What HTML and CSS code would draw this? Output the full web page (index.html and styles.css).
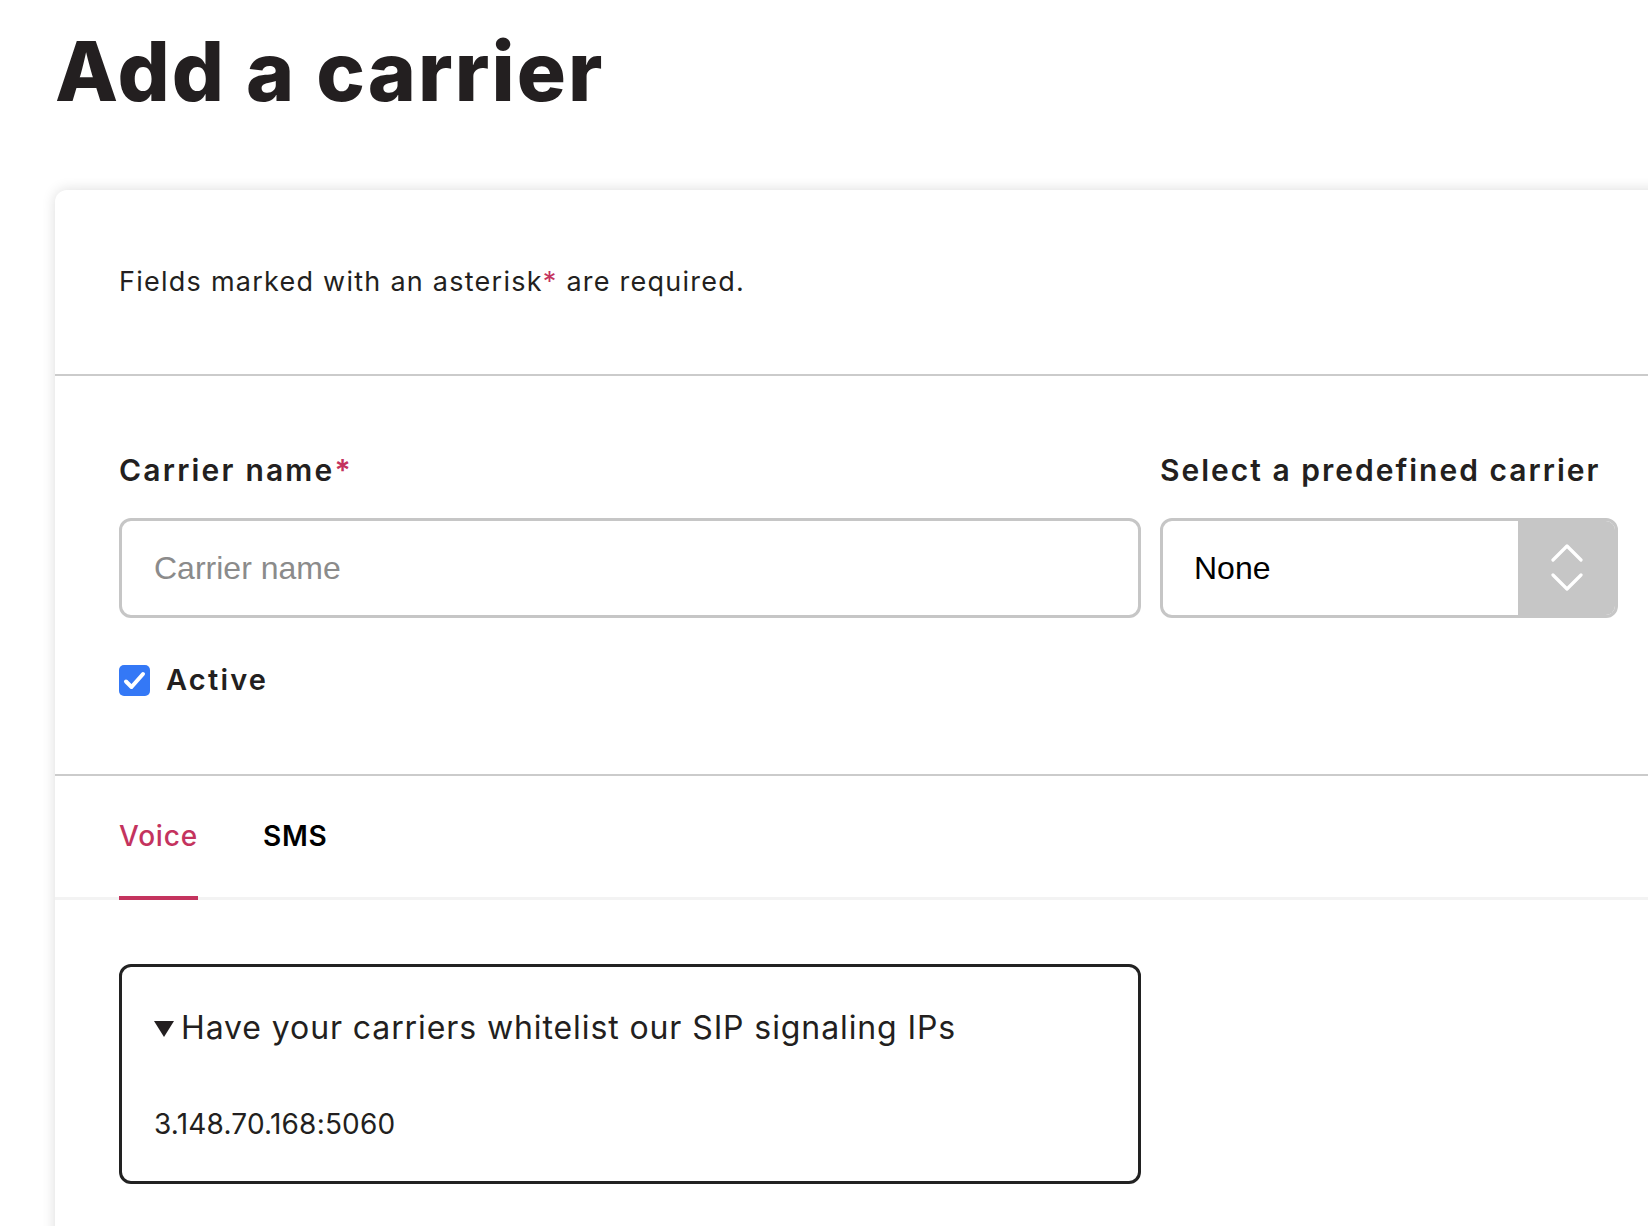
FILE: index.html
```html
<!DOCTYPE html>
<html lang="en">
<head>
<meta charset="utf-8">
<title>Add a carrier</title>
<link rel="stylesheet" href="styles.css">
</head>
<body>
<main class="page">
  <h1 class="title">Add a carrier</h1>
  <section class="card">
    <div class="section intro">
      <p class="note">Fields marked with an asterisk<span class="req">*</span> are required.</p>
    </div>
    <div class="section fields">
      <div class="grid">
        <label class="label" for="carrier-name">Carrier name<span class="req">*</span></label>
        <label class="label label-tight" for="predefined">Select a predefined carrier</label>
        <div class="input"><span class="placeholder">Carrier name</span></div>
        <div class="select" id="predefined">
          <span class="select-value">None</span>
          <span class="select-arrow">
            <svg width="32" height="50" viewBox="0 0 32 50" aria-hidden="true">
              <path d="M2 17 L16 3 L30 17" fill="none" stroke="#fff" stroke-width="3.2" stroke-linecap="round" stroke-linejoin="round"/>
              <path d="M2 32 L16 46 L30 32" fill="none" stroke="#fff" stroke-width="3.2" stroke-linecap="round" stroke-linejoin="round"/>
            </svg>
          </span>
        </div>
        <div class="check-row">
          <span class="checkbox">
            <svg width="31" height="31" viewBox="0 0 31 31" aria-hidden="true">
              <path d="M7 16.5 L12.5 22 L24 9" fill="none" stroke="#fff" stroke-width="4" stroke-linecap="round" stroke-linejoin="round"/>
            </svg>
          </span>
          <span class="check-label">Active</span>
        </div>
      </div>
    </div>
    <nav class="tabs">
      <span class="tab active">Voice</span>
      <span class="tab">SMS</span>
    </nav>
    <div class="section voice">
      <div class="details">
        <div class="summary">
          <svg class="tri" width="20" height="17" viewBox="0 0 20 17" aria-hidden="true"><path d="M0 1 H20 L10 17 Z" fill="#231f20"/></svg>
          <span>Have your carriers whitelist our SIP signaling IPs</span>
        </div>
        <p class="ip">3.148.70.168:5060</p>
      </div>
    </div>
  </section>
</main>
</body>
</html>
```

FILE: styles.css
```css
html, body {
  margin: 0;
  padding: 0;
  background: #ffffff;
  overflow: hidden;
}

body {
  font-family: "Inter", "Noto Sans", sans-serif;
  color: #231f20;
}

.page {
  padding-left: 55px;
}

.title {
  margin: 31px 0 0 0;
  font-size: 82px;
  line-height: 82px;
  font-weight: 800;
  letter-spacing: 2px;
  height: 82px;
}

.card {
  margin-top: 77px;
  width: 1700px;
  background: #fff;
  border-radius: 12px 0 0 0;
  box-shadow: 0 0 14px rgba(0, 0, 0, 0.14);
  min-height: 1100px;
}

.req {
  color: #c4335e;
}

.intro {
  padding: 72px 64px;
  border-bottom: 2px solid #cbcbcb;
}

.note {
  margin: 0;
  font-size: 27px;
  line-height: 40px;
  letter-spacing: 1.25px;
}

.fields {
  padding: 76px 64px 76px 64px;
  border-bottom: 2px solid #cbcbcb;
}

.grid {
  display: grid;
  grid-template-columns: 1022px 458px;
  column-gap: 19px;
  row-gap: 30px;
}

.label {
  font-size: 30px;
  line-height: 36px;
  font-weight: 600;
  letter-spacing: 2.2px;
}

.label-tight {
  letter-spacing: 2px;
}

.input,
.select {
  height: 100px;
  box-sizing: border-box;
  border: 3px solid #c6c6c6;
  border-radius: 12px;
  display: flex;
  align-items: center;
  font-family: "Liberation Sans", Arial, sans-serif;
  font-size: 32px;
}

.input {
  padding-left: 32px;
}

.placeholder {
  color: #8b8b8b;
}

.select {
  overflow: hidden;
}

.select-value {
  flex: 1;
  padding-left: 31px;
  color: #000;
}

.select-arrow {
  width: 97px;
  align-self: stretch;
  background: #c6c6c6;
  display: flex;
  align-items: center;
  justify-content: center;
}

.check-row {
  grid-column: 1;
  margin-top: 14px;
  display: flex;
  align-items: center;
  gap: 16px;
}

.checkbox {
  width: 31px;
  height: 31px;
  border-radius: 5px;
  background: #3478f6;
  display: flex;
}

.check-label {
  font-size: 29px;
  line-height: 36px;
  font-weight: 600;
  letter-spacing: 2.2px;
}

.tabs {
  display: flex;
  gap: 65px;
  padding: 0 64px;
  border-bottom: 3px solid #f3f3f3;
}

.tab {
  font-size: 28px;
  line-height: 36px;
  font-weight: 600;
  padding: 42px 0 42px 0;
  margin-bottom: -3px;
  border-bottom: 4px solid transparent;
  color: #000;
  letter-spacing: 0.8px;
}

.tab.active {
  color: #c4335e;
  border-bottom-color: #c4335e;
  font-weight: 500;
}

.voice {
  padding: 64px 64px;
}

.details {
  width: 1022px;
  box-sizing: border-box;
  border: 3px solid #222;
  border-radius: 12px;
  padding: 42px 34px 39px 34px;
}

.summary {
  display: flex;
  align-items: center;
  gap: 7px;
  font-size: 32px;
  line-height: 38px;
  letter-spacing: 0.9px;
}

.tri {
  flex: none;
  margin-left: -2px;
}

.ip {
  margin: 59px 0 0 -2px;
  font-size: 28px;
  line-height: 36px;
  letter-spacing: 0.2px;
}
```
